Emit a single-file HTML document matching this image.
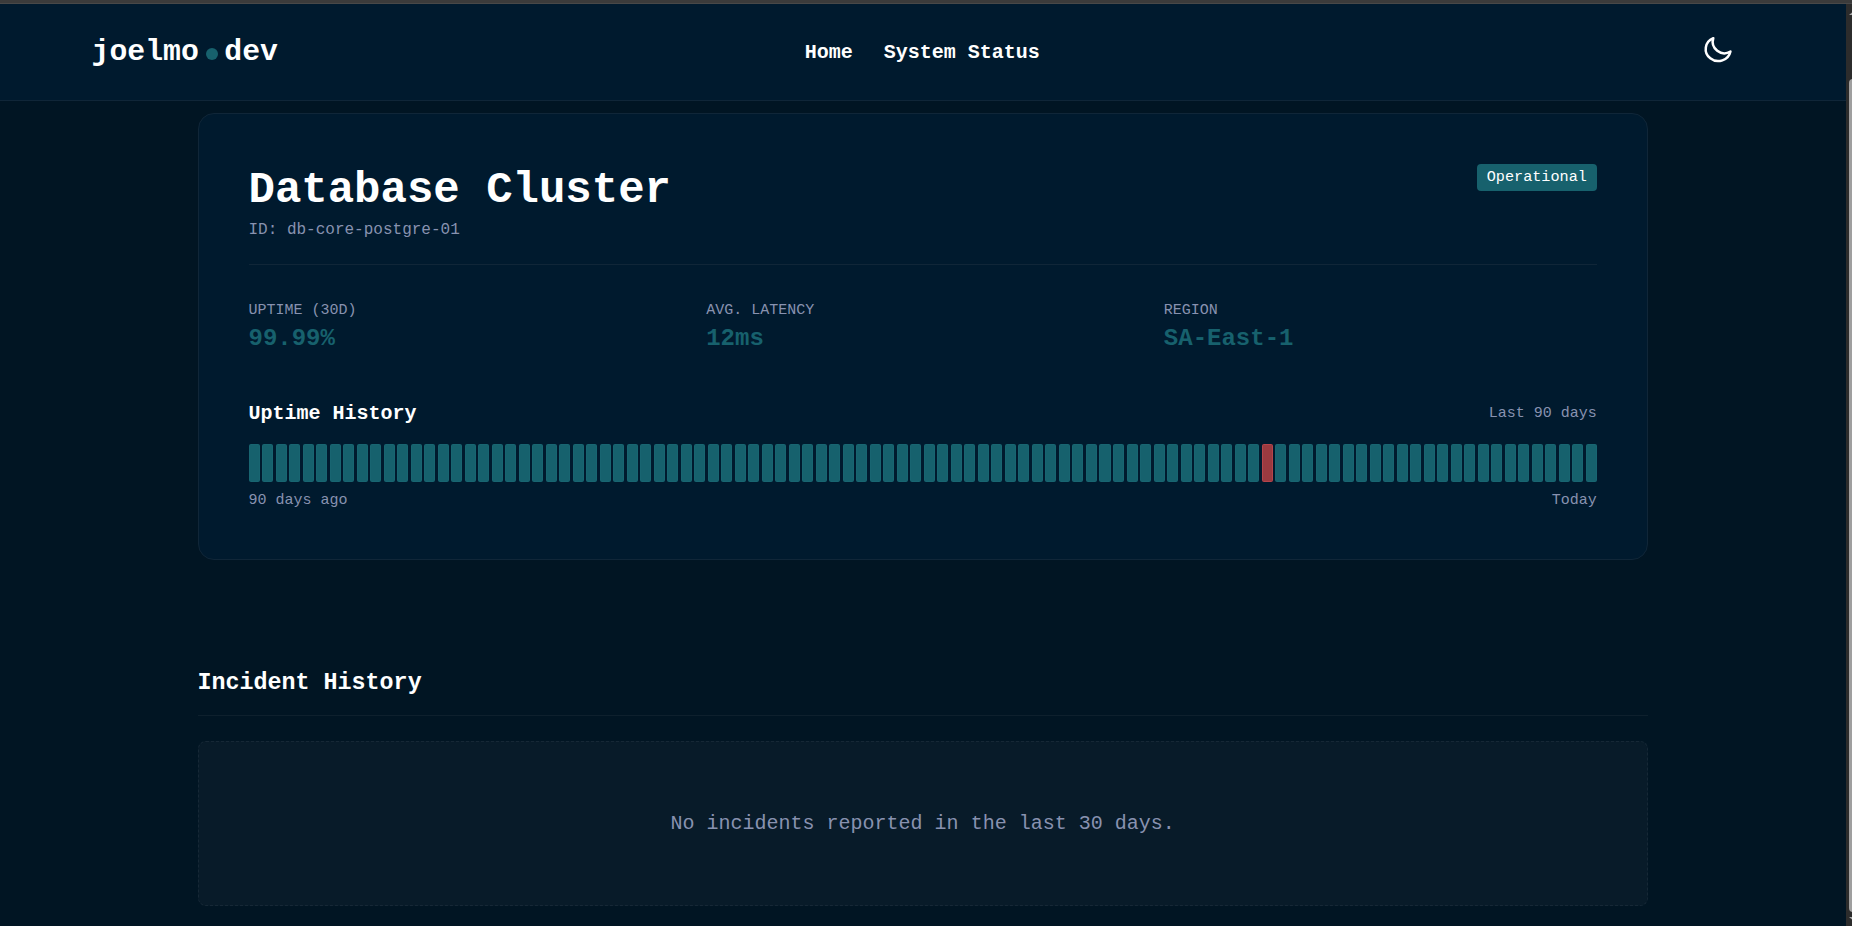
<!DOCTYPE html>
<html lang="en">
<head>
<meta charset="utf-8">
<title>System Status - joelmo.dev</title>
<style>
*{box-sizing:border-box;margin:0;padding:0}
html,body{width:1852px;height:926px;overflow:hidden;background:#011523}
body{font-family:"Liberation Mono","DejaVu Sans Mono",monospace;color:#fff;position:relative}
.chrome{position:absolute;left:0;top:0;width:1852px;height:4px;background:#3b3b3b;border-bottom:1px solid #484848;z-index:20}
.sb{position:absolute;left:1846px;top:4px;width:6px;height:922px;background:#2c2c2c;z-index:20}
.sb .thumb{position:absolute;left:3px;top:75px;width:8px;height:833px;background:#9f9f9f;border-radius:4px}
.sb .up{position:absolute;left:2.5px;top:6px;width:0;height:0;border-left:6px solid transparent;border-right:6px solid transparent;border-bottom:5px solid #a8a8a8}
.sb .dn{position:absolute;left:2.5px;top:913px;width:0;height:0;border-left:6px solid transparent;border-right:6px solid transparent;border-top:5px solid #a8a8a8}
.view{position:absolute;left:0;top:4px;width:1846px;height:922px;overflow:hidden}
header{position:absolute;left:0;top:0;width:1846px;height:97px;background:#001a2e;border-bottom:1px solid #102638;z-index:10}
.logo{position:absolute;left:91.5px;top:31px;font-size:29.8px;font-weight:700;line-height:34px;white-space:nowrap;display:flex;align-items:center}
.logo .dot{display:inline-block;width:12px;height:12px;border-radius:50%;background:#17616d;margin:4px 6.3px 0 7.2px}
nav{position:absolute;left:-0.7px;width:1846px;top:37px;text-align:center;font-size:20px;font-weight:700;line-height:24px}
nav a{color:#fff;text-decoration:none;margin:0 15.5px}
.moon{position:absolute;left:1702px;top:30px;width:32px;height:32px}
main{position:absolute;left:197.5px;top:109px;width:1450.25px}
.card{width:100%;height:447px;background:#001a2e;border:1px solid #102638;border-radius:16px;padding:50px;position:relative}
h1{font-size:44px;font-weight:700;line-height:50px;margin-top:1px}
.id{font-size:16px;color:#8892b0;line-height:18px;margin-top:6px}
.badge{position:absolute;right:50px;top:50px;background:#17616d;color:#fff;font-size:15.2px;line-height:17px;padding:5px 9.8px;border-radius:4px}
hr{border:0;border-top:1px solid #102638;margin-top:25px}
.stats{display:grid;grid-template-columns:repeat(3,1fr);gap:24.8px;margin-top:37px}
.stats .l{font-size:15px;color:#8892b0;line-height:18px}
.stats .v{font-size:24px;font-weight:700;color:#17616d;line-height:28px;margin-top:5px}
.uh{display:flex;justify-content:space-between;align-items:center;margin-top:49px}
.uh h3{font-size:20px;font-weight:700;line-height:24px}
.uh span{font-size:15px;color:#8892b0;position:relative;top:-1px}
.bars{position:relative;height:38px;margin-top:18px}
.b{position:absolute;top:0;width:11px;height:38px;background:#16616d;border:1px solid #186571;border-radius:1.5px;display:block}
.b.r{background:#9a3a40;border-color:#b5444b}
.bl{display:flex;justify-content:space-between;font-size:15px;color:#8892b0;margin-top:10px;line-height:17px}
h2{font-size:23.35px;font-weight:700;line-height:28px;margin-top:109px;padding-bottom:18px;border-bottom:1px solid #0e202d}
.empty{margin-top:25px;height:165px;border:1px dashed #162836;border-radius:8px;background:#081b29;color:#8892b0;font-size:20px;display:flex;align-items:center;justify-content:center}
</style>
</head>
<body>
<div class="chrome"></div>
<div class="view">
<header>
  <div class="logo"><span>joelmo</span><span class="dot"></span><span>dev</span></div>
  <nav><a>Home</a><a>System Status</a></nav>
  <svg class="moon" viewBox="0 0 32 32" fill="none" stroke="#fff" stroke-width="2.5" stroke-linejoin="round" stroke-linecap="round"><path d="M11.3 4.17 A12.5 11.9 0 1 0 28.45 17.5 A11.6 11.6 0 0 1 11.3 4.17 Z"/></svg>
</header>
<main>
  <section class="card">
    <h1>Database Cluster</h1>
    <div class="id">ID: db-core-postgre-01</div>
    <div class="badge">Operational</div>
    <hr>
    <div class="stats">
      <div><div class="l">UPTIME (30D)</div><div class="v">99.99%</div></div>
      <div><div class="l">AVG. LATENCY</div><div class="v">12ms</div></div>
      <div><div class="l">REGION</div><div class="v">SA-East-1</div></div>
    </div>
    <div class="uh"><h3>Uptime History</h3><span>Last 90 days</span></div>
    <div class="bars"><i class="b" style="left:0.5px"></i><i class="b" style="left:13.5px"></i><i class="b" style="left:27.5px"></i><i class="b" style="left:40.5px"></i><i class="b" style="left:54.5px"></i><i class="b" style="left:67.5px"></i><i class="b" style="left:81.5px"></i><i class="b" style="left:94.5px"></i><i class="b" style="left:108.5px"></i><i class="b" style="left:121.5px"></i><i class="b" style="left:135.5px"></i><i class="b" style="left:148.5px"></i><i class="b" style="left:162.5px"></i><i class="b" style="left:175.5px"></i><i class="b" style="left:189.5px"></i><i class="b" style="left:202.5px"></i><i class="b" style="left:216.5px"></i><i class="b" style="left:229.5px"></i><i class="b" style="left:243.5px"></i><i class="b" style="left:256.5px"></i><i class="b" style="left:270.5px"></i><i class="b" style="left:283.5px"></i><i class="b" style="left:297.5px"></i><i class="b" style="left:310.5px"></i><i class="b" style="left:324.5px"></i><i class="b" style="left:337.5px"></i><i class="b" style="left:351.5px"></i><i class="b" style="left:364.5px"></i><i class="b" style="left:378.5px"></i><i class="b" style="left:391.5px"></i><i class="b" style="left:405.5px"></i><i class="b" style="left:418.5px"></i><i class="b" style="left:432.5px"></i><i class="b" style="left:445.5px"></i><i class="b" style="left:459.5px"></i><i class="b" style="left:472.5px"></i><i class="b" style="left:486.5px"></i><i class="b" style="left:499.5px"></i><i class="b" style="left:513.5px"></i><i class="b" style="left:526.5px"></i><i class="b" style="left:540.5px"></i><i class="b" style="left:553.5px"></i><i class="b" style="left:567.5px"></i><i class="b" style="left:580.5px"></i><i class="b" style="left:594.5px"></i><i class="b" style="left:607.5px"></i><i class="b" style="left:621.5px"></i><i class="b" style="left:634.5px"></i><i class="b" style="left:648.5px"></i><i class="b" style="left:661.5px"></i><i class="b" style="left:675.5px"></i><i class="b" style="left:688.5px"></i><i class="b" style="left:702.5px"></i><i class="b" style="left:715.5px"></i><i class="b" style="left:729.5px"></i><i class="b" style="left:742.5px"></i><i class="b" style="left:756.5px"></i><i class="b" style="left:769.5px"></i><i class="b" style="left:783.5px"></i><i class="b" style="left:796.5px"></i><i class="b" style="left:810.5px"></i><i class="b" style="left:823.5px"></i><i class="b" style="left:837.5px"></i><i class="b" style="left:850.5px;width:12px"></i><i class="b" style="left:864.5px"></i><i class="b" style="left:878.5px"></i><i class="b" style="left:891.5px"></i><i class="b" style="left:905.5px"></i><i class="b" style="left:918.5px"></i><i class="b" style="left:932.5px"></i><i class="b" style="left:945.5px"></i><i class="b" style="left:959.5px"></i><i class="b" style="left:972.5px"></i><i class="b" style="left:986.5px"></i><i class="b" style="left:999.5px"></i><i class="b r" style="left:1013.5px"></i><i class="b" style="left:1026.5px"></i><i class="b" style="left:1040.5px"></i><i class="b" style="left:1053.5px"></i><i class="b" style="left:1067.5px"></i><i class="b" style="left:1080.5px"></i><i class="b" style="left:1094.5px"></i><i class="b" style="left:1107.5px"></i><i class="b" style="left:1121.5px"></i><i class="b" style="left:1134.5px"></i><i class="b" style="left:1148.5px"></i><i class="b" style="left:1161.5px"></i><i class="b" style="left:1175.5px"></i><i class="b" style="left:1188.5px"></i><i class="b" style="left:1202.5px"></i><i class="b" style="left:1215.5px"></i><i class="b" style="left:1229.5px"></i><i class="b" style="left:1242.5px"></i><i class="b" style="left:1256.5px"></i><i class="b" style="left:1269.5px"></i><i class="b" style="left:1283.5px"></i><i class="b" style="left:1296.5px"></i><i class="b" style="left:1310.5px"></i><i class="b" style="left:1323.5px"></i><i class="b" style="left:1337.5px"></i></div>
    <div class="bl"><span>90 days ago</span><span>Today</span></div>
  </section>
  <h2>Incident History</h2>
  <div class="empty">No incidents reported in the last 30 days.</div>
</main>
</div>
<div class="sb"><div class="up"></div><div class="thumb"></div><div class="dn"></div></div>
</body>
</html>
